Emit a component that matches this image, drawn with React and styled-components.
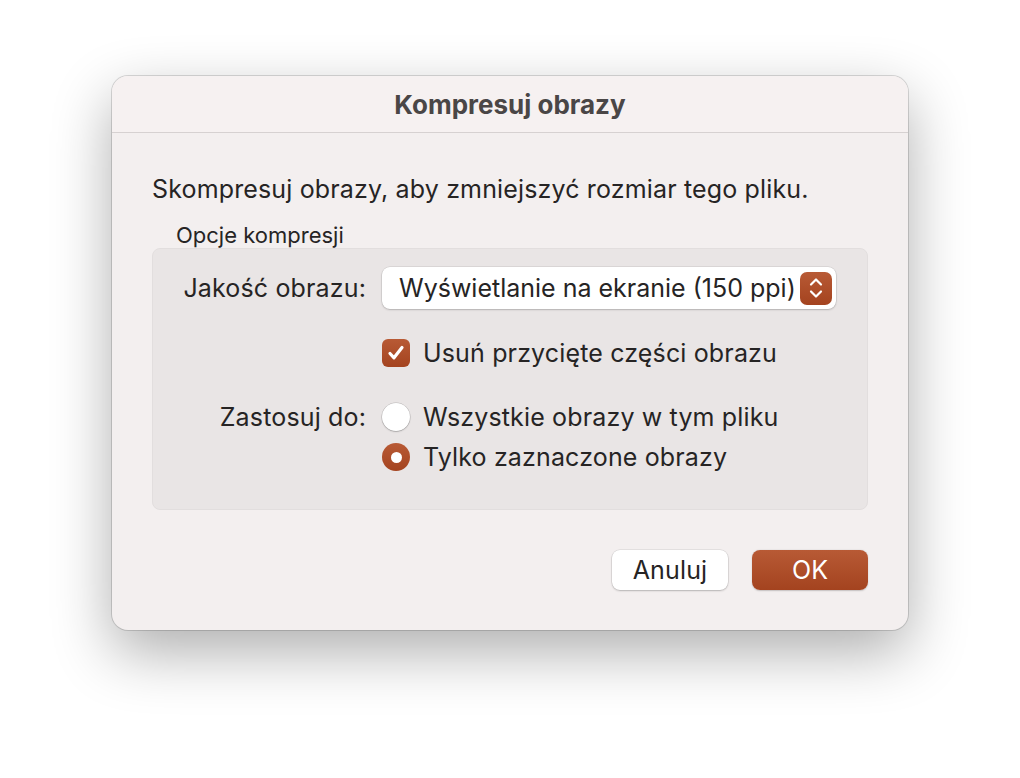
import React from 'react'
import styled, { createGlobalStyle } from 'styled-components'

const Global = createGlobalStyle`
  html, body { margin: 0; padding: 0; background: #ffffff; }
  body { font-family: Inter, "Noto Sans", "Liberation Sans", sans-serif; color: #262424; }
`

const Page = styled.div`
  width: 1020px;
  height: 778px;
  padding: 76px 0 0 112px;
  box-sizing: border-box;
`

const Dialog = styled.div`
  width: 796px;
  height: 554px;
  box-sizing: border-box;
  background: #f3efef;
  border-radius: 16px;
  box-shadow: 0 0 0 1px rgba(0, 0, 0, 0.14), 0 22px 60px rgba(0, 0, 0, 0.32);
  overflow: hidden;
  display: flex;
  flex-direction: column;
`

const TitleBar = styled.div`
  height: 56px;
  flex-shrink: 0;
  background: #f6f1f1;
  border-bottom: 1px solid #d6d1d1;
  display: flex;
  align-items: center;
  justify-content: center;
  font-weight: 700;
  font-size: 26px;
  color: #4a4646;
`

const Body = styled.div`
  padding: 41px 40px 0 40px;
  display: flex;
  flex-direction: column;
  font-size: 25px;
  letter-spacing: 0.15px;
`

const Intro = styled.div`
  line-height: 30px;
`

const GroupLabel = styled.div`
  font-size: 22px;
  line-height: 26px;
  letter-spacing: 0;
  margin: 18px 0 0 24px;
`

const Group = styled.div`
  height: 262px;
  box-sizing: border-box;
  background: #e9e5e5;
  border: 1px solid #e2dede;
  border-radius: 8px;
  padding: 18px 31px 0 0;
  display: grid;
  grid-template-columns: 213px 1fr;
  column-gap: 16px;
  align-content: start;
`

const Label = styled.div`
  text-align: right;
  align-self: center;
  grid-column: 1;
  margin-top: ${p => p.$top || 0}px;
`

const Cell = styled.div`
  grid-column: 2;
  margin-top: ${p => p.$top || 0}px;
`

const Popup = styled.div`
  height: 42px;
  box-sizing: border-box;
  background: #ffffff;
  border-radius: 8px;
  box-shadow: 0 0 0 0.5px rgba(0, 0, 0, 0.12), 0 1px 2px rgba(0, 0, 0, 0.18);
  display: flex;
  align-items: center;
  justify-content: space-between;
  padding: 0 4px 0 17px;
  letter-spacing: 0;
  white-space: nowrap;
`

const Stepper = styled.div`
  width: 32px;
  height: 33px;
  flex-shrink: 0;
  border-radius: 7px;
  background: linear-gradient(#b85a35, #a4431f);
  display: flex;
  align-items: center;
  justify-content: center;
`

const Option = styled.label`
  display: flex;
  align-items: center;
  gap: 13px;
  height: 36px;
`

const Check = styled.span`
  width: 28px;
  height: 28px;
  border-radius: 6px;
  background: linear-gradient(#b85a35, #a4431f);
  display: flex;
  align-items: center;
  justify-content: center;
  flex-shrink: 0;
`

const Radio = styled.span`
  width: 28px;
  height: 28px;
  border-radius: 50%;
  box-sizing: border-box;
  flex-shrink: 0;
  display: flex;
  align-items: center;
  justify-content: center;
  background: ${p => (p.$on ? 'linear-gradient(#b85a35, #a4431f)' : '#ffffff')};
  box-shadow: ${p => (p.$on ? 'none' : '0 0 0 0.5px rgba(0,0,0,0.2), 0 1px 1.5px rgba(0,0,0,0.18)')};
  &::after {
    content: '';
    display: ${p => (p.$on ? 'block' : 'none')};
    width: 11px;
    height: 11px;
    border-radius: 50%;
    background: #ffffff;
  }
`

const Footer = styled.div`
  display: flex;
  justify-content: flex-end;
  gap: 24px;
  margin-top: 40px;
`

const Button = styled.div`
  width: 116px;
  height: 40px;
  box-sizing: border-box;
  border-radius: 8px;
  display: flex;
  align-items: center;
  justify-content: center;
  color: ${p => (p.$primary ? '#ffffff' : '#262424')};
  background: ${p => (p.$primary ? 'linear-gradient(#b85a35, #a4431f)' : '#ffffff')};
  box-shadow: ${p =>
    p.$primary ? '0 0.5px 1.5px rgba(0,0,0,0.2)' : '0 0 0 0.5px rgba(0,0,0,0.12), 0 1px 2px rgba(0,0,0,0.2)'};
`

const Chevrons = () => (
  <svg width="18" height="26" viewBox="0 0 18 26" fill="none" stroke="#fff" strokeWidth="2.2" strokeLinecap="round" strokeLinejoin="round">
    <path d="M4 9.5 L9 4.5 L14 9.5" />
    <path d="M4 16.5 L9 21.5 L14 16.5" />
  </svg>
)

const Tick = () => (
  <svg width="22" height="22" viewBox="0 0 22 22" fill="none" stroke="#fff" strokeWidth="3.2" strokeLinecap="round" strokeLinejoin="round">
    <path d="M5 11.5 L9 15.8 L17 5.5" />
  </svg>
)

export default function App() {
  return (
    <Page>
      <Global />
      <Dialog>
        <TitleBar>Kompresuj obrazy</TitleBar>
        <Body>
          <Intro>Skompresuj obrazy, aby zmniejszyć rozmiar tego pliku.</Intro>
          <GroupLabel>Opcje kompresji</GroupLabel>
          <Group>
            <Label>Jakość obrazu:</Label>
            <Cell>
              <Popup>
                Wyświetlanie na ekranie (150 ppi)
                <Stepper><Chevrons /></Stepper>
              </Popup>
            </Cell>
            <Cell $top={26}>
              <Option><Check><Tick /></Check>Usuń przycięte części obrazu</Option>
            </Cell>
            <Label $top={28}>Zastosuj do:</Label>
            <Cell $top={28}>
              <Option><Radio />Wszystkie obrazy w tym pliku</Option>
            </Cell>
            <Cell $top={4}>
              <Option><Radio $on />Tylko zaznaczone obrazy</Option>
            </Cell>
          </Group>
          <Footer>
            <Button>Anuluj</Button>
            <Button $primary>OK</Button>
          </Footer>
        </Body>
      </Dialog>
    </Page>
  )
}
